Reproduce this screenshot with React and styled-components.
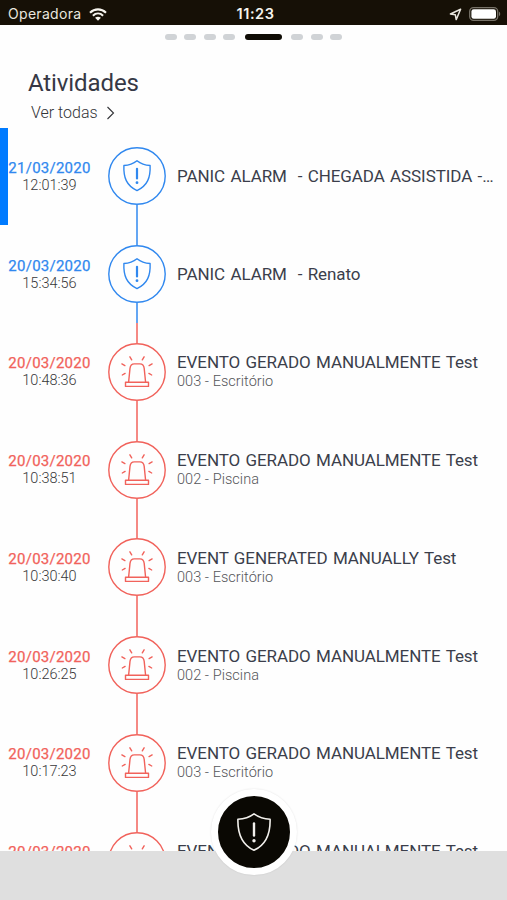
import React from 'react'
import styled, { createGlobalStyle } from 'styled-components'

const GlobalStyle = createGlobalStyle`
  * {
    box-sizing: border-box;
  }
  body {
    margin: 0;
    background: #fff;
    font-family: Roboto, "Liberation Sans", sans-serif;
  }
`;

const Screen = styled.div`
  position: relative;
  display: flex;
  flex-direction: column;
  width: 507px;
  height: 900px;
  overflow: hidden;
  background: #fefefe;
`;

const StatusBar = styled.header`
  display: grid;
  grid-template-columns: 1fr auto 1fr;
  align-items: center;
  flex: none;
  height: 25px;
  padding: 3px 6px 0 8px;
  background: #161006;
  color: #e9e6df;
  font-family: Inter, "Liberation Sans", sans-serif;
  font-size: 14px;
  line-height: 20px;
  .carrier {
    display: flex;
    align-items: center;
    gap: 8px;
    letter-spacing: 0.3px;
  }
  .clock {
    color: #f6f4ee;
    font-size: 14.5px;
    font-weight: 600;
    letter-spacing: 0.6px;
    padding-left: 2px;
  }
  .indicators {
    display: flex;
    align-items: center;
    justify-content: flex-end;
    gap: 7px;
  }
  svg {
    display: block;
  }
`;

const Pager = styled.nav`
  display: flex;
  justify-content: center;
  flex: none;
  gap: 7.5px;
  padding-top: 9px;
  height: 44px;
`;

const Dot = styled.span`
  width: ${({ $active }) => ($active ? '37px' : '12px')};
  height: 6px;
  margin: ${({ $active }) => ($active ? '0 2px' : '0')};
  border-radius: 3px;
  background: ${({ $active }) => ($active ? '#0f0c05' : '#d0d3d6')};
`;

const Heading = styled.div`
  flex: none;
  height: 58.5px;
  padding-left: 28px;
  h1 {
    margin: 0;
    color: #363845;
    font-size: 24px;
    font-weight: 400;
    line-height: 28px;
    letter-spacing: -0.1px;
  }
`;

const SeeAll = styled.a`
  display: flex;
  align-items: center;
  gap: 8px;
  padding: 6px 0 0 3px;
  color: #333438;
  font-size: 16px;
  font-weight: 300;
  line-height: 20px;
`;

const Timeline = styled.main`
  flex: 1;
  min-height: 0;
  overflow: hidden;
`;

const Row = styled.article`
  display: grid;
  grid-template-columns: 8px 83px 92px 1fr;
  align-items: center;
  height: 97.75px;
`;

const Marker = styled.span`
  height: 100%;
  background: ${({ $active }) => ($active ? '#007bff' : 'transparent')};
`;

const When = styled.div`
  text-align: center;
  time {
    display: block;
    white-space: nowrap;
  }
  .date {
    color: ${({ $color }) => $color};
    font-size: 15px;
    line-height: 18px;
    letter-spacing: 0.25px;
    -webkit-text-stroke: 0.25px currentColor;
  }
  .hour {
    color: #38383a;
    font-size: 14.5px;
    font-weight: 300;
    line-height: 17px;
  }
`;

const Track = styled.div`
  display: flex;
  flex-direction: column;
  align-items: center;
  height: 100%;
  color: ${({ $color }) => $color};
`;

const Line = styled.span`
  flex: 1;
  width: 2px;
  background: ${({ $hidden }) => ($hidden ? 'transparent' : 'currentColor')};
  opacity: 0.75;
`;

const Badge = styled.span`
  display: flex;
  flex: none;
  width: 58px;
  height: 58px;
  svg {
    display: block;
  }
`;

const Details = styled.div`
  min-width: 0;
  padding-right: 5px;
  margin-left: -6px;
  h2 {
    margin: 0;
    color: #3b3e4b;
    font-size: 17px;
    font-weight: 400;
    line-height: 20px;
    letter-spacing: -0.09px;
    word-spacing: 1.3px;
    white-space: pre;
  }
  p {
    margin: 0;
    padding-top: 1px;
    color: #55565a;
    font-size: 14.5px;
    font-weight: 300;
    line-height: 18px;
    letter-spacing: 0.05px;
  }
`;

const BottomBar = styled.footer`
  flex: none;
  height: 49px;
  background: #dfdfdf;
`;

const PanicButton = styled.button`
  position: absolute;
  left: 211px;
  bottom: 25px;
  display: flex;
  align-items: center;
  justify-content: center;
  width: 86px;
  height: 86px;
  padding: 0;
  border: 7px solid #fff;
  border-radius: 50%;
  background: #0a0803;
  box-shadow: 0 0 2px rgba(0, 0, 0, 0.12);
`;

const BLUE = '#3088ef';
const RED = '#f1625b';

const events = [
  { kind: 'panic', date: '21/03/2020', hour: '12:01:39', title: 'PANIC ALARM  - CHEGADA ASSISTIDA -…' },
  { kind: 'panic', date: '20/03/2020', hour: '15:34:56', title: 'PANIC ALARM  - Renato' },
  { kind: 'siren', date: '20/03/2020', hour: '10:48:36', title: 'EVENTO GERADO MANUALMENTE Test', zone: '003 - Escritório' },
  { kind: 'siren', date: '20/03/2020', hour: '10:38:51', title: 'EVENTO GERADO MANUALMENTE Test', zone: '002 - Piscina' },
  { kind: 'siren', date: '20/03/2020', hour: '10:30:40', title: 'EVENT GENERATED MANUALLY Test', zone: '003 - Escritório' },
  { kind: 'siren', date: '20/03/2020', hour: '10:26:25', title: 'EVENTO GERADO MANUALMENTE Test', zone: '002 - Piscina' },
  { kind: 'siren', date: '20/03/2020', hour: '10:17:23', title: 'EVENTO GERADO MANUALMENTE Test', zone: '003 - Escritório' },
  { kind: 'siren', date: '20/03/2020', hour: '10:12:08', title: 'EVENTO GERADO MANUALMENTE Test', zone: '002 - Piscina' },
];

const ShieldBadge = () => (
  <svg width="58" height="58" viewBox="0 0 58 58" fill="none" stroke="currentColor" strokeWidth="1.4">
    <circle cx="29" cy="29" r="28.2" />
    <path d="M29 13.7C25.5 16.5 20.5 18.2 15.9 18.5C15.4 30.5 18.4 38.5 29 43.6C39.6 38.5 42.6 30.5 42.1 18.5C37.5 18.2 32.5 16.5 29 13.7Z" strokeLinejoin="round" />
    <path d="M29 21.8V31.5" strokeWidth="2.2" strokeLinecap="round" />
    <circle cx="29" cy="35.7" r="1.4" fill="currentColor" stroke="none" />
  </svg>
)

const SirenBadge = () => (
  <svg width="58" height="58" viewBox="0 0 58 58" fill="none" stroke="currentColor" strokeWidth="1.4" strokeLinejoin="round">
    <circle cx="29" cy="29" r="28.2" />
    <path d="M20.6 39.2L22 25.4C22.3 22.5 23.8 20.9 26.3 20.9H31.9C34.4 20.9 35.9 22.5 36.2 25.4L37.6 39.2" />
    <rect x="17.5" y="39.3" width="23" height="4.1" />
    <path d="M21.9 13.8L23.7 16.8M36.1 13.8L34.3 16.8M13.9 20.9L16.9 22.6M44.1 20.9L41.1 22.6M14.3 32L17.1 30.4M43.7 32L40.9 30.4" strokeLinecap="round" />
  </svg>
)

const App = () => {
  return (
    <>
      <GlobalStyle />
      <Screen>
        <StatusBar>
          <div className="carrier">
            <span>Operadora</span>
            <svg width="18" height="13" viewBox="0 0 18 13" fill="none" stroke="#f6f4ee" strokeWidth="2.1">
              <path d="M1 4.7C5.6 0.2 12.4 0.2 17 4.7" />
              <path d="M3.9 7.7C6.9 4.8 11.1 4.8 14.1 7.7" />
              <path d="M9 12.8L6.1 9.8C7.8 8.3 10.2 8.3 11.9 9.8Z" fill="#f6f4ee" stroke="none" />
            </svg>
          </div>
          <span className="clock">11:23</span>
          <div className="indicators">
            <svg width="13" height="13" viewBox="0 0 13 13" fill="none" stroke="#e9e6df" strokeWidth="1.5" strokeLinejoin="round">
              <path d="M11.6 1.3L1.4 6L6.3 6.7L7.2 11.6Z" />
            </svg>
            <svg width="32" height="14" viewBox="0 0 32 14">
              <rect x="0.7" y="0.7" width="28" height="12.6" rx="3.8" fill="none" stroke="#777268" strokeWidth="1.3" />
              <rect x="2.4" y="2.3" width="24.6" height="9.4" rx="2.3" fill="#fff" />
              <path d="M30 4.8C31.6 5.4 31.6 8.6 30 9.2Z" fill="#777268" />
            </svg>
          </div>
        </StatusBar>
        <Pager>
          {[0, 1, 2, 3, 4, 5, 6, 7].map((page) => (
            <Dot key={page} $active={page === 4} />
          ))}
        </Pager>
        <Heading>
          <h1>Atividades</h1>
          <SeeAll>
            <span>Ver todas</span>
            <svg width="9" height="14" viewBox="0 0 9 14" fill="none" stroke="currentColor" strokeWidth="1.1">
              <path d="M1.5 1L7.5 7L1.5 13" />
            </svg>
          </SeeAll>
        </Heading>
        <Timeline>
          {
            events.map((event, index) => {
              const color = event.kind === 'panic' ? BLUE : RED;
              return (
                <Row key={index}>
                  <Marker $active={index === 0} />
                  <When $color={color}>
                    <time className="date">{event.date}</time>
                    <time className="hour">{event.hour}</time>
                  </When>
                  <Track $color={color}>
                    <Line $hidden={index === 0} />
                    <Badge>
                      {event.kind === 'panic' ? <ShieldBadge /> : <SirenBadge />}
                    </Badge>
                    <Line />
                  </Track>
                  <Details>
                    <h2>{event.title}</h2>
                    {event.zone && <p>{event.zone}</p>}
                  </Details>
                </Row>
              )
            })
          }
        </Timeline>
        <BottomBar />
        <PanicButton aria-label="Panic">
          <svg width="36" height="40" viewBox="0 0 36 40" fill="none" stroke="#f2f0ec" strokeWidth="1.6" strokeLinejoin="round">
            <path d="M18 1.8C13.5 5.2 7.5 7 1.9 7.3C1.6 21.5 5.5 32.5 18 38.2C30.5 32.5 34.4 21.5 34.1 7.3C28.5 7 22.5 5.2 18 1.8Z" />
            <path d="M18 11.5V23.5" strokeWidth="2.4" strokeLinecap="round" />
            <circle cx="18" cy="28.8" r="1.7" fill="#f2f0ec" stroke="none" />
          </svg>
        </PanicButton>
      </Screen>
    </>
  )
}

export default App
